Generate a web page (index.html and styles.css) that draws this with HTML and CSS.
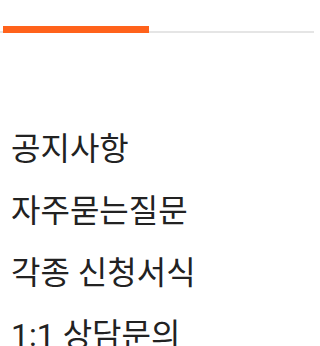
FILE: index.html
```html
<!DOCTYPE html>
<html lang="ko">
<head>
<meta charset="utf-8">
<link rel="stylesheet" href="styles.css">
</head>
<body>
<div class="tabs"><div class="indicator"></div></div>
<ul class="menu">
<li>공지사항</li>
<li>자주묻는질문</li>
<li>각종 신청서식</li>
<li>1:1 상담문의</li>
</ul>
</body>
</html>
```
FILE: styles.css
```css
html, body { margin: 0; padding: 0; background: #fff; }
body { width: 314px; height: 346px; overflow: hidden; font-family: Roboto, "Noto Sans CJK KR", sans-serif; color: #222; }
.tabs { height: 31px; border-bottom: 2px solid #e5e5e5; display: flex; align-items: flex-end; padding-left: 3px; }
.indicator { width: 146px; height: 7px; margin-bottom: -2px; background: #ff621b; }
.menu { list-style: none; margin: 0; padding: 85px 0 0 11px; }
.menu li { font-size: 32px; line-height: 62px; height: 62px; }
```
